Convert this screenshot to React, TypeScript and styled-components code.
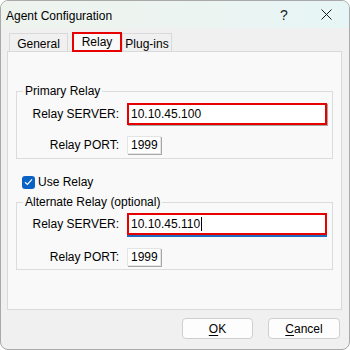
import React from "react";
import styled, { createGlobalStyle } from "styled-components";

const GlobalStyle = createGlobalStyle`
	html, body {
		margin: 0;
		padding: 0;
		background: #ffffff;
	}
	* {
		box-sizing: border-box;
	}
`;

const uiFont = `"Liberation Sans", Arial, sans-serif`;

const Window = styled.div`
	width: 350px;
	height: 350px;
	border: 1px solid #a9a9a9;
	border-radius: 8px;
	overflow: hidden;
	background: #f0f0f0;
	display: flex;
	flex-direction: column;
	font-family: ${uiFont};
	font-size: 11px;
	color: #000;
`;

const TitleBar = styled.div`
	height: 27px;
	flex-shrink: 0;
	display: flex;
	align-items: center;
	padding-left: 5px;
	background: linear-gradient(90deg, #eef3ee 0%, #ecf4f1 55%, #e6f5f5 100%);
	h1 {
		flex: 1;
		margin: 0;
		font-family: ${uiFont};
		font-size: 12px;
		font-weight: 400;
		padding-top: 2px;
	}
`;

const CaptionButton = styled.button<{ $wide?: boolean }>`
	width: ${(p) => (p.$wide ? "46px" : "38px")};
	height: 27px;
	border: none;
	background: transparent;
	padding: 0;
	display: flex;
	align-items: center;
	justify-content: center;
	font-family: ${uiFont};
	font-size: 14px;
	color: #1a1a1a;
`;

const Content = styled.div`
	flex: 1;
	display: flex;
	flex-direction: column;
	padding: 4px 7px 0 6px;
`;

const TabRow = styled.div`
	height: 20px;
	display: flex;
	align-items: flex-end;
	padding-left: 2px;
	position: relative;
	z-index: 1;
	margin-bottom: -1px;
`;

const Tab = styled.div<{ $width: number; $active?: boolean }>`
	width: ${(p) => p.$width}px;
	height: ${(p) => (p.$active ? "20px" : "19px")};
	margin-left: ${(p) => (p.$active ? "4px" : "0")};
	display: flex;
	align-items: center;
	justify-content: center;
	font-size: 12px;
	background: ${(p) => (p.$active ? "#f9f9f9" : "#f0f0f0")};
	border: ${(p) => (p.$active ? "2px solid #e60000" : "1px solid #d9d9d9")};
	padding-top: ${(p) => (p.$active ? "0" : "2px")};
`;

const Panel = styled.div`
	height: 259px;
	border: 1px solid #d9d9d9;
	background: #f9f9f9;
	padding: 32px 8px 0 8px;
	display: flex;
	flex-direction: column;
`;

const Group = styled.fieldset<{ $top: number; $bottom: number }>`
	margin: 0;
	min-width: 0;
	border: 1px solid #dcdcdc;
	padding: ${(p) => p.$top}px 0 ${(p) => p.$bottom}px 0;
	legend {
		margin-left: 6px;
		padding: 0 2px;
		font-size: 12px;
		line-height: 14px;
	}
`;

const FieldGrid = styled.div<{ $gap: number }>`
	display: grid;
	grid-template-columns: 102px 200px;
	column-gap: 8px;
	row-gap: ${(p) => p.$gap}px;
	align-items: center;
	label {
		text-align: right;
		font-size: 12px;
	}
`;

const ServerBox = styled.div<{ $focused?: boolean }>`
	height: 22px;
	background: #fff;
	border: 2px solid #e60000;
	display: flex;
	align-items: center;
	padding-left: 2px;
	font-size: 12px;
	box-shadow: ${(p) => (p.$focused ? "0 2px 0 #1d6cc2" : "1px 1px 0 #a6a6a6")};
`;

const Caret = styled.span`
	display: inline-block;
	width: 1px;
	height: 14px;
	background: #000;
	margin-left: 1px;
`;

const PortBox = styled.div`
	width: 34px;
	height: 18px;
	justify-self: start;
	background: #fff;
	border: 1px solid #e4e4e4;
	box-shadow: 1px 1px 0 #a8a8a8;
	display: flex;
	align-items: center;
	padding-left: 3px;
	font-size: 12px;
`;

const CheckRow = styled.label`
	height: 14px;
	margin: 16px 0 6px 6px;
	display: flex;
	align-items: center;
	gap: 3px;
	font-size: 12px;
`;

const CheckBox = styled.span`
	width: 13px;
	height: 13px;
	border-radius: 3px;
	background: #0a63c4;
	display: flex;
	align-items: center;
	justify-content: center;
`;

const Footer = styled.div`
	display: flex;
	justify-content: flex-end;
	gap: 15px;
	padding: 8px 2px 0 0;
`;

const Button = styled.button<{ $width: number }>`
	width: ${(p) => p.$width}px;
	height: 21px;
	background: #fdfdfd;
	border: 1px solid #cfcfcf;
	border-radius: 4px;
	font-family: ${uiFont};
	font-size: 12px;
	color: #000;
	padding: 0;
	u {
		text-underline-offset: 2px;
	}
`;

const App = () => {
	return (
		<>
			<GlobalStyle />
			<Window>
				<TitleBar>
					<h1>Agent Configuration</h1>
					<CaptionButton>?</CaptionButton>
					<CaptionButton $wide>
						<svg width="11" height="11" viewBox="0 0 11 11">
							<path d="M0.5 0.5 L10.5 10.5 M10.5 0.5 L0.5 10.5" stroke="#1a1a1a" strokeWidth="1" />
						</svg>
					</CaptionButton>
				</TitleBar>
				<Content>
					<TabRow>
						<Tab $width={59}>General</Tab>
						<Tab $width={50} $active>Relay</Tab>
						<Tab $width={50}>Plug-ins</Tab>
					</TabRow>
					<Panel>
						<Group $top={5} $bottom={4}>
							<legend>Primary Relay</legend>
							<FieldGrid $gap={11}>
								<label>Relay SERVER:</label>
								<ServerBox>10.10.45.100</ServerBox>
								<label>Relay PORT:</label>
								<PortBox>1999</PortBox>
							</FieldGrid>
						</Group>
						<CheckRow>
							<CheckBox>
								<svg width="9" height="8" viewBox="0 0 9 8">
									<path d="M1 4.2 L3.4 6.4 L8 1.4" stroke="#fff" strokeWidth="1.2" fill="none" />
								</svg>
							</CheckBox>
							Use Relay
						</CheckRow>
						<Group $top={4} $bottom={3}>
							<legend>Alternate Relay (optional)</legend>
							<FieldGrid $gap={13}>
								<label>Relay SERVER:</label>
								<ServerBox $focused>
									10.10.45.110
									<Caret />
								</ServerBox>
								<label>Relay PORT:</label>
								<PortBox>1999</PortBox>
							</FieldGrid>
						</Group>
					</Panel>
					<Footer>
						<Button $width={71}>
							<u>O</u>K
						</Button>
						<Button $width={72}>
							<u>C</u>ancel
						</Button>
					</Footer>
				</Content>
			</Window>
		</>
	);
};

export default App;
